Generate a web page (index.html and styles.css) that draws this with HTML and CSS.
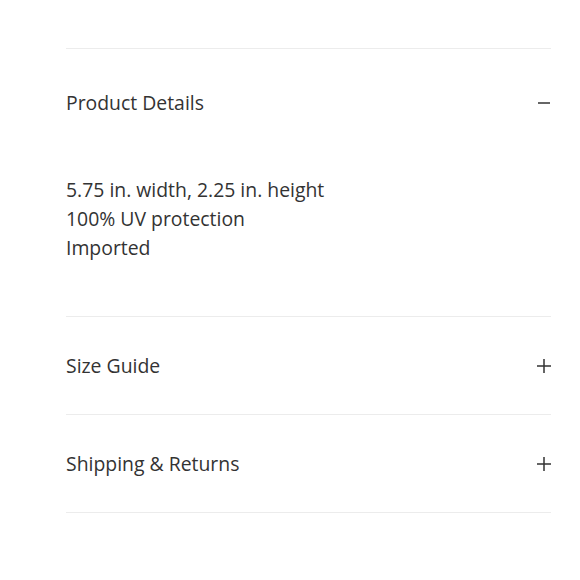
FILE: index.html
```html
<!DOCTYPE html>
<html lang="en">
<head>
    <meta charset="UTF-8">
    <meta name="viewport" content="width=device-width, initial-scale=1.0">
    <title>Product Details</title>
    <link rel="stylesheet" href="styles.css">
</head>
<body>
    <div class="accordion">
        <div class="item open">
            <div class="item-head">
                <span class="item-title">Product Details</span>
                <svg class="icon" width="14" height="14" viewBox="0 0 14 14"><path d="M1 7H13"/></svg>
            </div>
            <div class="item-body">
                5.75 in. width, 2.25 in. height<br>
                100% UV protection<br>
                Imported
            </div>
        </div>
        <div class="item">
            <div class="item-head">
                <span class="item-title">Size Guide</span>
                <svg class="icon" width="14" height="14" viewBox="0 0 14 14"><path d="M0 7H14M7 0V14"/></svg>
            </div>
        </div>
        <div class="item">
            <div class="item-head">
                <span class="item-title">Shipping &amp; Returns</span>
                <svg class="icon" width="14" height="14" viewBox="0 0 14 14"><path d="M0 7H14M7 0V14"/></svg>
            </div>
        </div>
    </div>
</body>
</html>
```

FILE: styles.css
```css
body { margin: 0; background: #fff; font-family: "Open Sans", Arial, sans-serif; color: #333; }
.accordion { margin: 48px 29px 0 66px; border-top: 1px solid #ececec; }
.item { border-bottom: 1px solid #ececec; }
.item-head {
    display: flex;
    justify-content: space-between;
    align-items: center;
    padding: 35px 0 34px;
    font-size: 19.4px;
    line-height: 28px;
}
.item.open .item-head { padding: 40px 0 0; }
.item-body { padding: 58px 0 54px; font-size: 19.4px; line-height: 29px; }
.icon { fill: none; stroke: #333; stroke-width: 1.5; }
```
